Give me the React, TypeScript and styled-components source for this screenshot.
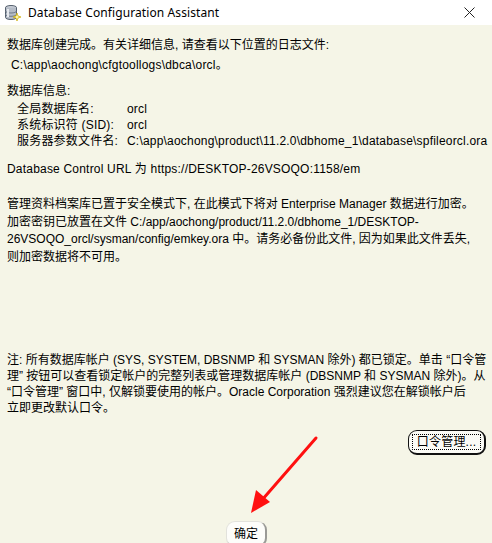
import React from "react";
import styled, { createGlobalStyle } from "styled-components";

const Global = createGlobalStyle`
  html, body { margin: 0; padding: 0; background: #f5f5e7; }
  body { width: 492px; height: 543px; overflow: hidden; }
`;

const Window = styled.div`
  position: relative;
  width: 492px;
  height: 543px;
  display: flex;
  flex-direction: column;
  background: #f5f5e7;
  overflow: hidden;
  font-family: "Liberation Sans", "Noto Sans CJK SC", sans-serif;
  font-size: 12px;
  color: #000;
`;

const TitleBar = styled.div`
  height: 25px;
  flex: none;
  background: #fff;
  display: flex;
  align-items: center;
  padding: 0 0 0 4px;
  font-family: "Noto Sans", "Liberation Sans", sans-serif;
  font-size: 12px;
  letter-spacing: 0.1px;
  color: #000;
`;

const TitleText = styled.span`
  margin-left: 6px;
  flex: 1;
`;

const CloseBox = styled.div`
  width: 46px;
  height: 25px;
  display: flex;
  align-items: center;
  justify-content: center;
`;

const Content = styled.div`
  flex: 1;
  display: flex;
  flex-direction: column;
  padding: 12px 6px 0 7px;
`;

const Line = styled.div<{ $indent?: number; $lh?: number; $wide?: boolean }>`
  white-space: nowrap;
  line-height: ${(p) => p.$lh ?? 16}px;
  padding-left: ${(p) => p.$indent ?? 0}px;
  letter-spacing: ${(p) => (p.$wide ? "0.2px" : "0")};
`;

const Block = styled.div<{ $mt: number }>`
  margin-top: ${(p) => p.$mt}px;
`;

const InfoRows = styled.div`
  margin-top: 2px;
  letter-spacing: 0.2px;
`;

const InfoRow = styled.div`
  display: grid;
  grid-template-columns: 110px auto;
  padding-left: 10px;
  line-height: 16px;
  white-space: nowrap;
`;

const ButtonRow = styled.div<{ $justify: string; $mt: number }>`
  display: flex;
  justify-content: ${(p) => p.$justify};
  margin-top: ${(p) => p.$mt}px;
`;

const PwdButton = styled.button`
  width: 78px;
  height: 25px;
  padding: 3px;
  border: 1px solid #111;
  border-right-width: 2px;
  border-bottom-width: 2px;
  border-radius: 9px;
  background: #fbfbf6;
  font-family: inherit;
  font-size: 12px;
  letter-spacing: 0.2px;
  color: #000;
  display: flex;
  cursor: pointer;
`;

const FocusRect = styled.span`
  flex: 1;
  display: flex;
  align-items: center;
  justify-content: center;
  border: 1px dotted #000;
  border-radius: 1px;
  line-height: 14px;
`;

const OkButton = styled.button`
  width: 41px;
  height: 26px;
  padding: 0 0 2px;
  border: 1px solid #e2e2dc;
  border-right: 2px solid #9a9a96;
  border-bottom: 2px solid #c8c8c2;
  border-radius: 9px;
  background: #fdfdfa;
  font-family: inherit;
  font-size: 12px;
  color: #000;
  cursor: pointer;
`;

const ArrowLayer = styled.svg`
  position: absolute;
  left: 0;
  top: 0;
  pointer-events: none;
`;

const DbIcon = () => (
  <svg width="18" height="18" viewBox="0 0 18 18">
    <ellipse cx="7" cy="3.5" rx="5.5" ry="2" fill="#c9ced6" stroke="#55606e" strokeWidth="1" />
    <path d="M1.5 3.5 V13.5 A5.5 2 0 0 0 12.5 13.5 V3.5" fill="#b5bcc7" stroke="#55606e" strokeWidth="1" />
    <path d="M1.5 7 A5.5 2 0 0 0 12.5 7 M1.5 10.3 A5.5 2 0 0 0 12.5 10.3" fill="none" stroke="#6f7a88" strokeWidth="1" />
    <rect x="3" y="5" width="2" height="8" fill="#e6e9ee" />
    <path d="M13 9 L14 12 L17 13 L14 14 L13 17 L12 14 L9 13 L12 12 Z" fill="#fff6a0" stroke="#c9a800" strokeWidth="0.7" />
  </svg>
);

const CloseIcon = () => (
  <svg width="11" height="11" viewBox="0 0 11 11">
    <path d="M0.5 0.5 L10.5 10.5 M10.5 0.5 L0.5 10.5" stroke="#222" strokeWidth="1" />
  </svg>
);

export default function App() {
  return (
    <>
      <Global />
      <Window>
        <TitleBar>
          <DbIcon />
          <TitleText>Database Configuration Assistant</TitleText>
          <CloseBox>
            <CloseIcon />
          </CloseBox>
        </TitleBar>
        <Content>
          <Line>数据库创建完成。有关详细信息, 请查看以下位置的日志文件:</Line>
          <Line $indent={4} $wide style={{ marginTop: 4 }}>
            C:\app\aochong\cfgtoollogs\dbca\orcl。
          </Line>
          <Block $mt={10}>
            <Line>数据库信息:</Line>
            <InfoRows>
              <InfoRow>
                <span>全局数据库名:</span>
                <span>orcl</span>
              </InfoRow>
              <InfoRow>
                <span>系统标识符 (SID):</span>
                <span>orcl</span>
              </InfoRow>
              <InfoRow>
                <span>服务器参数文件名:</span>
                <span>C:\app\aochong\product\11.2.0\dbhome_1\database\spfileorcl.ora</span>
              </InfoRow>
            </InfoRows>
          </Block>
          <Block $mt={12}>
            <Line $wide>Database Control URL 为 https://DESKTOP-26VSOQO:1158/em</Line>
          </Block>
          <Block $mt={19}>
            <Line $lh={17.5}>管理资料档案库已置于安全模式下, 在此模式下将对 Enterprise Manager 数据进行加密。</Line>
            <Line $lh={17.5}>加密密钥已放置在文件 C:/app/aochong/product/11.2.0/dbhome_1/DESKTOP-</Line>
            <Line $lh={17.5}>26VSOQO_orcl/sysman/config/emkey.ora 中。请务必备份此文件, 因为如果此文件丢失,</Line>
            <Line $lh={17.5}>则加密数据将不可用。</Line>
          </Block>
          <Block $mt={86}>
            <Line>注: 所有数据库帐户 (SYS, SYSTEM, DBSNMP 和 SYSMAN 除外) 都已锁定。单击 “口令管</Line>
            <Line>理” 按钮可以查看锁定帐户的完整列表或管理数据库帐户 (DBSNMP 和 SYSMAN 除外)。从</Line>
            <Line>“口令管理” 窗口中, 仅解锁要使用的帐户。Oracle Corporation 强烈建议您在解锁帐户后</Line>
            <Line>立即更改默认口令。</Line>
          </Block>
          <ButtonRow $justify="flex-end" $mt={14}>
            <PwdButton>
              <FocusRect>口令管理...</FocusRect>
            </PwdButton>
          </ButtonRow>
          <ButtonRow $justify="center" $mt={66}>
            <OkButton>确定</OkButton>
          </ButtonRow>
        </Content>
        <ArrowLayer width="492" height="543" viewBox="0 0 492 543">
          <path d="M316 438 L262 500" stroke="#ff1010" strokeWidth="3" strokeLinecap="round" />
          <path d="M251 513 L256 490 L270 502 Z" fill="#ff1010" />
        </ArrowLayer>
      </Window>
    </>
  );
}
